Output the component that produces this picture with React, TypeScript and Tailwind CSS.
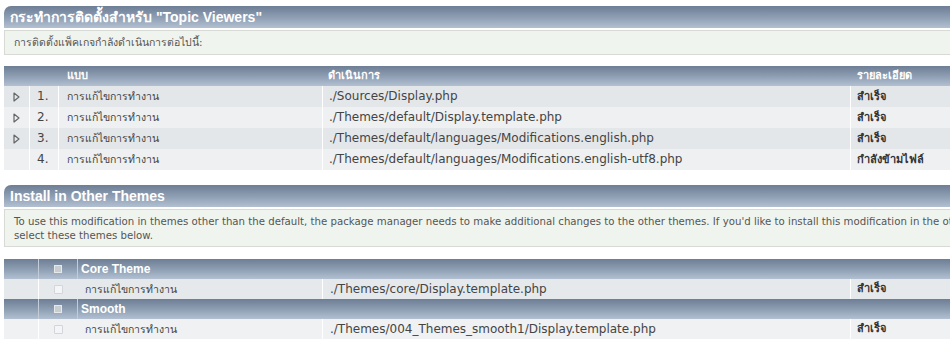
import React from 'react';

const FONT = '"DejaVu Sans", Tahoma, "Noto Sans", sans-serif';

const steps = [
  { n: '1.', type: 'การแก้ไขการทำงาน', path: './Sources/Display.php', status: 'สำเร็จ', arrow: true },
  { n: '2.', type: 'การแก้ไขการทำงาน', path: './Themes/default/Display.template.php', status: 'สำเร็จ', arrow: true },
  { n: '3.', type: 'การแก้ไขการทำงาน', path: './Themes/default/languages/Modifications.english.php', status: 'สำเร็จ', arrow: true },
  { n: '4.', type: 'การแก้ไขการทำงาน', path: './Themes/default/languages/Modifications.english-utf8.php', status: 'กำลังข้ามไฟล์', arrow: false },
];

const themes = [
  { name: 'Core Theme', type: 'การแก้ไขการทำงาน', path: './Themes/core/Display.template.php', status: 'สำเร็จ' },
  { name: 'Smooth', type: 'การแก้ไขการทำงาน', path: './Themes/004_Themes_smooth1/Display.template.php', status: 'สำเร็จ' },
];

const bar = 'bg-gradient-to-b from-[#6d7e95] via-[#8d9db2] to-[#b2c0d1]';

const TitleBar: React.FC<{ children: React.ReactNode }> = ({ children }) => (
  <div className={`h-[22px] rounded-tl-[7px] ${bar} pl-[6px] text-white font-bold text-[14px] leading-[22px] whitespace-nowrap`}
    style={{ fontFamily: '"Liberation Sans", Arial, sans-serif' }}>
    {children}
  </div>
);

const Arrow = () => (
  <svg width="7" height="10" viewBox="0 0 7 10" className="block">
    <path d="M1 1 L6 5 L1 9 Z" fill="none" stroke="#666" strokeWidth="1.2" strokeLinejoin="round" />
  </svg>
);

const App: React.FC = () => {
  return (
    <div className="w-[950px] h-[345px] overflow-hidden bg-white text-[11px] text-[#444]" style={{ fontFamily: FONT }}>
      <div className="w-[1000px] pl-[4px] pt-[6px]">
        <TitleBar>กระทำการติดตั้งสำหรับ "Topic Viewers"</TitleBar>
        <div className="mt-[2px] h-[25px] border border-[#d7dad5] bg-[#f0f4ee] pl-[9px] leading-[23px] text-[10.5px] text-[#555] whitespace-nowrap">
          การติดตั้งแพ็คเกจกำลังดำเนินการต่อไปนี้:
        </div>

        {/* Actions table */}
        <div className="mt-[11px]">
          <div className={`grid grid-cols-[25px_29px_264px_528px_1fr] h-[20px] ${bar} text-white font-bold leading-[20px]`}>
            <div />
            <div />
            <div className="pl-[9px]">แบบ</div>
            <div className="pl-[6px]">ดำเนินการ</div>
            <div className="pl-[7px]">รายละเอียด</div>
          </div>
          {steps.map((s, i) => (
            <div key={s.n} className={`grid grid-cols-[25px_29px_264px_528px_1fr] h-[21px] leading-[21px] ${i % 2 === 0 ? 'bg-[#e4e7ea]' : 'bg-[#eef0f2]'}`}>
              <div className="flex items-center pl-[9px]">{s.arrow && <Arrow />}</div>
              <div className="border-l border-white pl-[7px] text-[12px]">{s.n}</div>
              <div className="border-l border-white pl-[8px] text-[10.5px]">{s.type}</div>
              <div className="border-l border-white pl-[6px] text-[12px] whitespace-nowrap">{s.path}</div>
              <div className="border-l border-white pl-[6px] font-bold text-[#333] whitespace-nowrap">{s.status}</div>
            </div>
          ))}
        </div>

        {/* Other themes */}
        <div className="mt-[15px]">
          <TitleBar>Install in Other Themes</TitleBar>
          <div className="mt-[2px] h-[38px] border border-[#d7dad5] bg-[#f0f4ee] pl-[9px] pt-[5px] leading-[14px] text-[10.2px] text-[#555] whitespace-nowrap">
            To use this modification in themes other than the default, the package manager needs to make additional changes to the other themes. If you'd like to install this modification in the other themes,
            <br />
            select these themes below.
          </div>
        </div>

        <div className="mt-[12px]">
          {themes.map((t, i) => (
            <React.Fragment key={t.name}>
              <div className={`grid grid-cols-[34px_39px_1fr] h-[20px] ${bar} text-white font-bold leading-[20px]`}>
                <div />
                <div className="border-l border-[#c3ccd8] flex items-center justify-center">
                  <span className="block w-[8px] h-[8px] bg-[#c9ccd0] border border-[#e6e8ea]" />
                </div>
                <div className="border-l border-[#c3ccd8] pl-[3px] text-[12px]" style={{ fontFamily: '"Liberation Sans", Arial, sans-serif' }}>{t.name}</div>
              </div>
              <div className={`grid grid-cols-[34px_39px_245px_528px_1fr] h-[20px] leading-[20px] ${i === 0 ? 'bg-[#e6e9ec]' : 'bg-[#eff1f3]'}`}>
                <div />
                <div className="border-l border-white flex items-center justify-center">
                  <span className="block w-[9px] h-[9px] rounded-[1px] border border-[#d2d5d9] bg-[#f4f5f6]" />
                </div>
                <div className="pl-[8px] text-[10.5px]">{t.type}</div>
                <div className="border-l border-white pl-[7px] text-[12px] whitespace-nowrap">{t.path}</div>
                <div className="border-l border-white pl-[6px] font-bold text-[#333]">{t.status}</div>
              </div>
            </React.Fragment>
          ))}
        </div>
      </div>
    </div>
  );
};

export default App;
